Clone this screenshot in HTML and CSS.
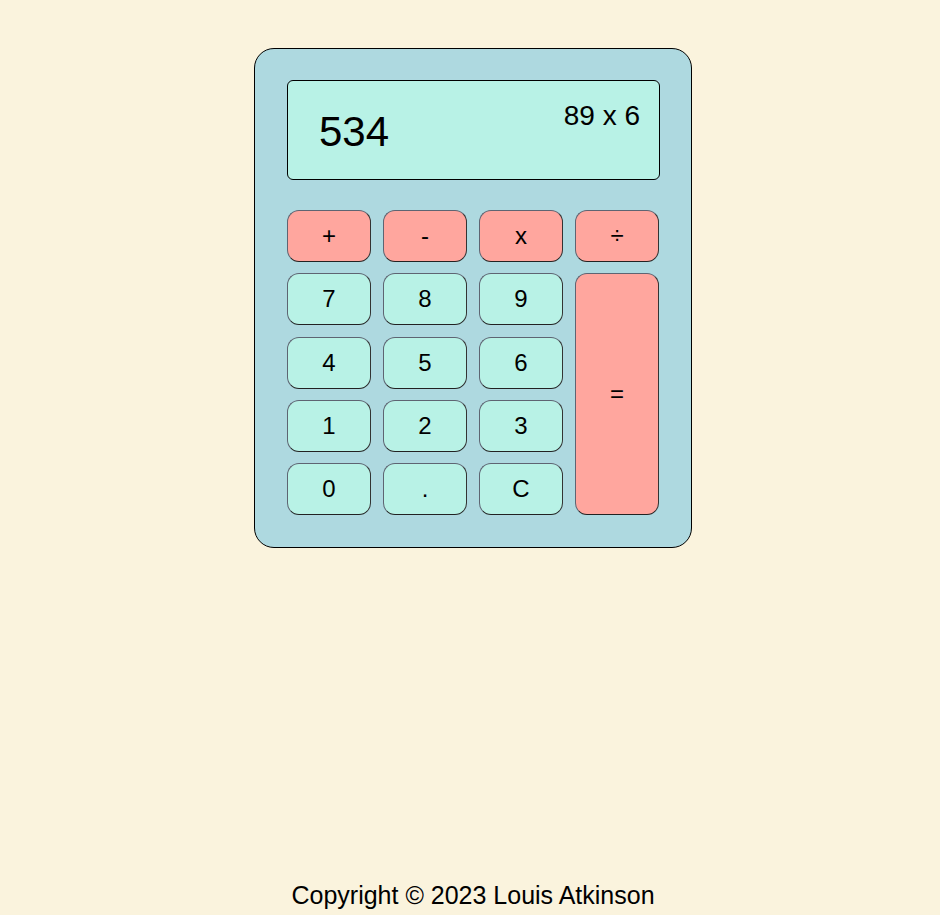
FILE: index.html
```html
<!DOCTYPE html>
<html lang="en">
<head>
<meta charset="utf-8">
<title>Calculator</title>
<link rel="stylesheet" href="styles.css">
</head>
<body>
<main class="main">
  <div class="calculator">
    <div class="display">
      <span class="current">534</span>
      <span class="previous">89 x 6</span>
    </div>
    <div class="keys">
      <button class="key op">+</button>
      <button class="key op">-</button>
      <button class="key op">x</button>
      <button class="key op">÷</button>
      <button class="key">7</button>
      <button class="key">8</button>
      <button class="key">9</button>
      <button class="key op equals">=</button>
      <button class="key">4</button>
      <button class="key">5</button>
      <button class="key">6</button>
      <button class="key">1</button>
      <button class="key">2</button>
      <button class="key">3</button>
      <button class="key">0</button>
      <button class="key">.</button>
      <button class="key">C</button>
    </div>
  </div>
</main>
<footer class="footer">Copyright © 2023 Louis Atkinson</footer>
</body>
</html>
```
FILE: styles.css
```css
* { box-sizing: border-box; }
html, body { margin: 0; padding: 0; }
body {
  background: #faf3dd;
  font-family: "Liberation Sans", Arial, sans-serif;
  color: #000;
  min-height: 100vh;
  display: flex;
  flex-direction: column;
  padding-left: 6px;
}
.main {
  flex: 1;
  display: flex;
  justify-content: center;
  align-items: flex-start;
  padding-top: 48px;
}
.calculator {
  width: 438px;
  height: 500px;
  background: #aed9e0;
  border: 1px solid #000;
  border-radius: 20px;
  padding: 31px 31px 32px 32px;
  display: flex;
  flex-direction: column;
  gap: 30px;
}
.display {
  height: 100px;
  background: #b8f2e6;
  border: 1px solid #000;
  border-radius: 6px;
  display: flex;
  justify-content: space-between;
  align-items: flex-start;
  padding: 0 19px 0 31px;
}
.current {
  font-size: 42px;
  line-height: 1;
  margin-top: 30px;
}
.previous {
  font-size: 28px;
  line-height: 1;
  margin-top: 21px;
}
.keys {
  display: grid;
  grid-template-columns: repeat(4, 84px);
  grid-template-rows: repeat(5, 52px);
  column-gap: 12px;
  row-gap: 11.25px;
}
.key {
  font-family: "Liberation Sans", Arial, sans-serif;
  font-size: 24px;
  color: #000;
  background: #b8f2e6;
  border: 1px solid #5e6472;
  border-bottom-color: #222;
  border-right-color: #333;
  border-radius: 12px;
  padding: 0;
  margin: 0;
}
.op { background: #ffa69e; }
.equals {
  grid-column: 4;
  grid-row: 2 / span 4;
}
.footer {
  text-align: center;
  font-size: 25px;
  line-height: 1.15;
  padding-bottom: 5px;
}
```
